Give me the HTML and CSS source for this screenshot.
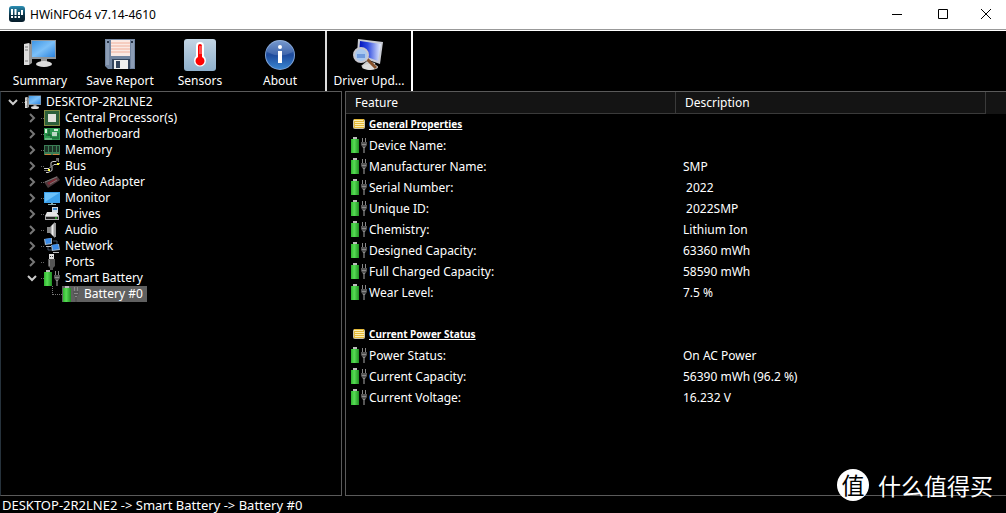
FILE: index.html
```html
<!DOCTYPE html>
<html lang="en">
<head>
<meta charset="utf-8">
<title>HWiNFO64 v7.14-4610</title>
<link rel="stylesheet" href="styles.css">
</head>
<body>

<!-- icons used more than once -->
<svg class="defs" width="0" height="0" aria-hidden="true">
    <defs>
        <linearGradient id="blue" x1="0" y1="0" x2="1" y2="1">
            <stop offset="0" stop-color="#3f97e6"/>
            <stop offset=".5" stop-color="#7cc0f8"/>
            <stop offset="1" stop-color="#2b84e0"/>
        </linearGradient>
        <linearGradient id="green" x1="0" y1="0" x2="1" y2="0">
            <stop offset="0" stop-color="#2fb52f"/>
            <stop offset=".4" stop-color="#58dc55"/>
            <stop offset="1" stop-color="#1f8f22"/>
        </linearGradient>
        <linearGradient id="steel" x1="0" y1="0" x2="1" y2="0">
            <stop offset="0" stop-color="#777"/>
            <stop offset=".5" stop-color="#eee"/>
            <stop offset="1" stop-color="#888"/>
        </linearGradient>
        <linearGradient id="navy" x1="0" y1="0" x2="1" y2="0">
            <stop offset="0" stop-color="#0010b8"/>
            <stop offset=".4" stop-color="#2f4be0"/>
            <stop offset="1" stop-color="#e8f0ff"/>
        </linearGradient>
        <linearGradient id="info" x1="0" y1="0" x2="0" y2="1">
            <stop offset="0" stop-color="#5c85c4"/>
            <stop offset=".5" stop-color="#1d4a9c"/>
            <stop offset="1" stop-color="#3a86d0"/>
        </linearGradient>
        <linearGradient id="sky" x1="0" y1="0" x2="0" y2="1">
            <stop offset="0" stop-color="#c3d5e4"/>
            <stop offset="1" stop-color="#8fb0cc"/>
        </linearGradient>
        <linearGradient id="app" x1="0" y1="0" x2="0" y2="1">
            <stop offset="0" stop-color="#2c90b5"/>
            <stop offset=".6" stop-color="#0b2f42"/>
            <stop offset="1" stop-color="#061c2a"/>
        </linearGradient>
    </defs>
    <symbol id="battery" viewBox="0 0 16 16">
        <rect x="2" y="0" width="4" height="2" fill="#bbb"/>
        <rect x="0" y="2" width="8" height="14" fill="url(#green)"/>
        <path d="M11.500 1v4M14.500 1v4" stroke="#888"/>
        <path d="M10 5h6v3l-2 3v5h-2v-5l-2-3z" fill="#555"/>
        <path d="M11 7.500h4M12 10.500h2" stroke="#8a8a8a"/>
    </symbol>
    <symbol id="computer" viewBox="0 0 32 32">
        <path d="M0 5l5-1v22H0z" fill="#ddd"/>
        <path d="M5 4l3 2v18l-3 2z" fill="#999"/>
        <path d="M1 8h3M1 11h3M1 22h3" stroke="#777"/>
        <rect x="7" y="1" width="25" height="19" fill="#8d959c"/>
        <rect x="8" y="2" width="23" height="16" fill="url(#blue)"/>
        <path d="M17 20h6v3h-6z" fill="#999"/>
        <ellipse cx="20" cy="25" rx="8" ry="3" fill="#dcdcdc"/>
    </symbol>
    <symbol id="scroll" viewBox="0 0 12 10">
        <rect x="0" y="0" width="12" height="10" rx="2" fill="#c9c2a8"/>
        <rect x="1" y="0" width="10" height="9" fill="#e3b93a"/>
        <path d="M1 1.500h9M2 3.500h9M2 5.500h9M2 7.500h9" stroke="#fbeeb4"/>
    </symbol>
    <symbol id="closed" viewBox="0 0 10 10">
        <path d="M3 1l4 4-4 4" fill="none" stroke="#777" stroke-width="2"/>
    </symbol>
    <symbol id="open" viewBox="0 0 10 10">
        <path d="M1 3l4 4 4-4" fill="none" stroke="#ccc" stroke-width="2"/>
    </symbol>
</svg>

<div class="window">

    <header class="titlebar">
        <svg class="app-icon" viewBox="0 0 16 16">
            <rect width="16" height="16" rx="3" fill="url(#app)"/>
            <path d="M3 3v6M6.500 3v6M10 6v3M13 4v5M3 10v2M6.500 10v2M10 10v2" stroke="#fff" stroke-width="2"/>
        </svg>
        <h1 class="title">HWiNFO64 v7.14-4610</h1>
        <button class="caption" aria-label="Minimize"><svg viewBox="0 0 10 10"><path d="M0 5.500h10" stroke="#000"/></svg></button>
        <button class="caption" aria-label="Maximize"><svg viewBox="0 0 10 10"><path d="M.5.5h9v9h-9z" fill="none" stroke="#000"/></svg></button>
        <button class="caption" aria-label="Close"><svg viewBox="0 0 10 10"><path d="M0 0l10 10M10 0L0 10" stroke="#000"/></svg></button>
    </header>

    <nav class="toolbar">
        <button class="tool"><svg viewBox="0 0 32 32"><use href="#computer"/></svg><span>Summary</span></button>
        <button class="tool">
            <svg viewBox="0 0 32 32">
                <path d="M1 0h30v30H4l-3-3z" fill="#71849f"/>
                <path d="M2 1h3v25H2zM27 1h3v28h-3z" fill="#8c9db5"/>
                <rect x="7" y="1" width="19" height="16" fill="#fbeae4"/>
                <path d="M7 4h19M7 7h19M7 10h19M7 13h19" stroke="#f0b09c"/>
                <path d="M3 2h2v2H3zM27 2h2v2h-2z" fill="#273447"/>
                <rect x="8" y="20" width="18" height="10" fill="#33445c"/>
                <rect x="10" y="21" width="14" height="9" fill="#eee"/>
                <rect x="12" y="22" width="4" height="7" fill="#33445c"/>
            </svg>
            <span>Save Report</span>
        </button>
        <button class="tool">
            <svg viewBox="0 0 32 32">
                <rect width="32" height="32" rx="3" fill="url(#sky)"/>
                <path d="M12 7a4 4 0 0 1 8 0v10a6 6 0 1 1-8 0z" fill="#fff"/>
                <path d="M14 7a2 2 0 0 1 4 0v11a4.500 4.500 0 1 1-4 0z" fill="#f00"/>
                <path d="M15 8h3M15 10h3M15 12h3M15 14h3" stroke="#ff9a9a"/>
            </svg>
            <span>Sensors</span>
        </button>
        <button class="tool">
            <svg viewBox="0 0 32 32">
                <circle cx="16" cy="16" r="15" fill="#7fa3d6"/>
                <circle cx="16" cy="16" r="14" fill="url(#info)"/>
                <path d="M3 13a13 12 0 0 1 26 0q-13 7-26 0z" fill="#fff" opacity=".15"/>
                <circle cx="16" cy="8" r="2" fill="#fff"/>
                <path d="M14 12h4v12h-4z" fill="#fff"/>
            </svg>
            <span>About</span>
        </button>
        <button class="tool tool-update">
            <svg viewBox="0 0 32 32">
                <path d="M14 22l8 2 1 5-7 2-8-4z" fill="#ccc"/>
                <ellipse cx="17" cy="28" rx="8" ry="3" fill="#ddd"/>
                <path d="M5 0l25 3-3 22L4 17z" fill="#c9ccd4"/>
                <path d="M7 2l21 3-3 17L6 15z" fill="url(#navy)"/>
                <path d="M14 20l9 9" stroke="#86512b" stroke-width="3"/>
                <circle cx="8" cy="16" r="7" fill="#a9c8ef" stroke="#c8c8d0" stroke-width="2"/>
                <path d="M4 17h8" stroke="#6f9ade" stroke-width="4"/>
            </svg>
            <span>Driver Upd...</span>
        </button>
    </nav>

    <main class="panes">
        <section class="pane tree-pane">
            <ul class="tree">
                <li>
                    <div class="node">
                        <button class="toggle" aria-label="Collapse"><svg viewBox="0 0 10 10"><use href="#open"/></svg></button>
                        <svg class="icon" viewBox="0 0 32 28"><use href="#computer" width="32" height="32"/></svg>
                        <span class="label">DESKTOP-2R2LNE2</span>
                    </div>
                    <ul>
                        <li class="node">
                            <button class="toggle" aria-label="Expand"><svg viewBox="0 0 10 10"><use href="#closed"/></svg></button>
                            <svg class="icon" viewBox="0 0 16 16">
                                <rect width="16" height="16" fill="#2c5f3a"/>
                                <rect x=".5" y=".5" width="15" height="15" fill="none" stroke="#d9b84a" stroke-dasharray="1 1"/>
                                <rect x="4" y="4" width="8" height="8" fill="#e2e2dc"/>
                            </svg>
                            <span class="label">Central Processor(s)</span>
                        </li>
                        <li class="node">
                            <button class="toggle" aria-label="Expand"><svg viewBox="0 0 10 10"><use href="#closed"/></svg></button>
                            <svg class="icon" viewBox="0 0 16 16">
                                <rect y="2" width="16" height="12" fill="#2f9a52"/>
                                <path d="M1 3h2v4H1zM10 3h4v2h-4z" fill="#d8f0dc"/>
                                <rect x="8" y="6" width="5" height="4" fill="#bcd8c4"/>
                                <path d="M5 3v7M2 9h5v3M14 7v6M8 12h5" stroke="#12552a" fill="none"/>
                                <path d="M1 13h7" stroke="#a5d8b4"/>
                            </svg>
                            <span class="label">Motherboard</span>
                        </li>
                        <li class="node">
                            <button class="toggle" aria-label="Expand"><svg viewBox="0 0 10 10"><use href="#closed"/></svg></button>
                            <svg class="icon" viewBox="0 0 16 16">
                                <rect y="3" width="16" height="10" fill="#3b7d55"/>
                                <path d="M1 4h3v6H1zM5 4h3v6H5zM9 4h3v6H9zM13 4h2v6h-2z" fill="#1d3327"/>
                                <path d="M1 12.500h6M9 12.500h6" stroke="#c9803c"/>
                            </svg>
                            <span class="label">Memory</span>
                        </li>
                        <li class="node">
                            <button class="toggle" aria-label="Expand"><svg viewBox="0 0 10 10"><use href="#closed"/></svg></button>
                            <svg class="icon" viewBox="0 0 16 16">
                                <path d="M0 10.500h5l2-2v-4l2-1h3l1-1V0M2 14.500h2l4-2v-4l2-2h2l4-1" fill="none" stroke="#ccc"/>
                                <path d="M0 12.500h4M14.500 0v4" stroke="#777"/>
                                <path d="M4 11h2v2H4zM13 5h2v2h-2z" fill="#ff3"/>
                            </svg>
                            <span class="label">Bus</span>
                        </li>
                        <li class="node">
                            <button class="toggle" aria-label="Expand"><svg viewBox="0 0 10 10"><use href="#closed"/></svg></button>
                            <svg class="icon" viewBox="0 0 16 16">
                                <path d="M0 8l13-6 3 4-12 8z" fill="#4a3a3c"/>
                                <path d="M3 9l9-5 1 3-8 4z" fill="#7c2a34"/>
                                <path d="M1 8l12-5M6 10l7-4" stroke="#777"/>
                            </svg>
                            <span class="label">Video Adapter</span>
                        </li>
                        <li class="node">
                            <button class="toggle" aria-label="Expand"><svg viewBox="0 0 10 10"><use href="#closed"/></svg></button>
                            <svg class="icon" viewBox="0 0 16 16">
                                <rect y="2" width="16" height="11" fill="#3da2ec"/>
                                <path d="M1 3h14L1 12z" fill="#6cc2fa"/>
                                <path d="M7 13h2v1h3v1H4v-1h3z" fill="#8aa"/>
                            </svg>
                            <span class="label">Monitor</span>
                        </li>
                        <li class="node">
                            <button class="toggle" aria-label="Expand"><svg viewBox="0 0 10 10"><use href="#closed"/></svg></button>
                            <svg class="icon" viewBox="0 0 16 16">
                                <path d="M8 1h6v6H8z" fill="#cfd8e0"/>
                                <path d="M9 2h4v2H9z" fill="#3a86c8"/>
                                <path d="M3 6h9l3 4H1z" fill="#e6e6e6"/>
                                <path d="M1 10h14v4H1z" fill="#aaa"/>
                                <path d="M2 11h12v2H2z" fill="#222"/>
                                <path d="M11 12h2" stroke="#3f3"/>
                            </svg>
                            <span class="label">Drives</span>
                        </li>
                        <li class="node">
                            <button class="toggle" aria-label="Expand"><svg viewBox="0 0 10 10"><use href="#closed"/></svg></button>
                            <svg class="icon" viewBox="0 0 16 16">
                                <path d="M3 5h3v6H3z" fill="#888"/>
                                <path d="M6 5l5-5v16l-5-5z" fill="url(#steel)"/>
                                <path d="M11.500 1v14" stroke="#999"/>
                            </svg>
                            <span class="label">Audio</span>
                        </li>
                        <li class="node">
                            <button class="toggle" aria-label="Expand"><svg viewBox="0 0 10 10"><use href="#closed"/></svg></button>
                            <svg class="icon" viewBox="0 0 16 16">
                                <path d="M9 3h4v4M4 9v3h4" fill="none" stroke="#456"/>
                                <path d="M0 1l8-1v6l-7 1z" fill="#9fb4c8"/>
                                <path d="M1 1l6-1v5l-5 1z" fill="#3a8ae6"/>
                                <path d="M2 8h5v1H2z" fill="#bbb"/>
                                <path d="M7 7l8-1 1 6-8 1z" fill="#9fb4c8"/>
                                <path d="M8 7l6-1 1 5-6 1z" fill="#3a8ae6"/>
                                <path d="M9 14h6v1H9z" fill="#bbb"/>
                            </svg>
                            <span class="label">Network</span>
                        </li>
                        <li class="node">
                            <button class="toggle" aria-label="Expand"><svg viewBox="0 0 10 10"><use href="#closed"/></svg></button>
                            <svg class="icon" viewBox="0 0 16 16">
                                <path d="M5 0h5v5H5z" fill="#ddd"/>
                                <path d="M6 2h1v1H6zM8 2h1v1H8z" fill="#333"/>
                                <path d="M4 5h7v7l-2 2v2H6v-2l-2-2z" fill="#555"/>
                                <path d="M5.500 6v6" stroke="#888"/>
                            </svg>
                            <span class="label">Ports</span>
                        </li>
                        <li>
                            <div class="node">
                                <button class="toggle" aria-label="Collapse"><svg viewBox="0 0 10 10"><use href="#open"/></svg></button>
                                <svg class="icon" viewBox="0 0 16 16"><use href="#battery"/></svg>
                                <span class="label">Smart Battery</span>
                            </div>
                            <ul>
                                <li class="node leaf">
                                    <span class="elbow"></span>
                                    <span class="selected">
                                        <svg class="icon" viewBox="0 0 16 16"><use href="#battery"/></svg>
                                        <span class="label">Battery #0</span>
                                    </span>
                                </li>
                            </ul>
                        </li>
                    </ul>
                </li>
            </ul>
        </section>

        <section class="pane list-pane">
            <table class="list">
                <colgroup><col class="col-feature"><col class="col-desc"><col></colgroup>
                <thead>
                    <tr><th>Feature</th><th>Description</th><th class="filler"></th></tr>
                </thead>
                <tbody>
                    <tr class="group"><td colspan="3"><svg viewBox="0 0 12 10"><use href="#scroll"/></svg>General Properties</td></tr>
                    <tr><td><svg viewBox="0 0 16 16"><use href="#battery"/></svg>Device Name:</td><td></td></tr>
                    <tr><td><svg viewBox="0 0 16 16"><use href="#battery"/></svg>Manufacturer Name:</td><td>SMP</td></tr>
                    <tr><td><svg viewBox="0 0 16 16"><use href="#battery"/></svg>Serial Number:</td><td>&nbsp;2022</td></tr>
                    <tr><td><svg viewBox="0 0 16 16"><use href="#battery"/></svg>Unique ID:</td><td>&nbsp;2022SMP</td></tr>
                    <tr><td><svg viewBox="0 0 16 16"><use href="#battery"/></svg>Chemistry:</td><td>Lithium Ion</td></tr>
                    <tr><td><svg viewBox="0 0 16 16"><use href="#battery"/></svg>Designed Capacity:</td><td>63360 mWh</td></tr>
                    <tr><td><svg viewBox="0 0 16 16"><use href="#battery"/></svg>Full Charged Capacity:</td><td>58590 mWh</td></tr>
                    <tr><td><svg viewBox="0 0 16 16"><use href="#battery"/></svg>Wear Level:</td><td>7.5 %</td></tr>
                    <tr><td colspan="3"></td></tr>
                    <tr class="group"><td colspan="3"><svg viewBox="0 0 12 10"><use href="#scroll"/></svg>Current Power Status</td></tr>
                    <tr><td><svg viewBox="0 0 16 16"><use href="#battery"/></svg>Power Status:</td><td>On AC Power</td></tr>
                    <tr><td><svg viewBox="0 0 16 16"><use href="#battery"/></svg>Current Capacity:</td><td>56390 mWh (96.2 %)</td></tr>
                    <tr><td><svg viewBox="0 0 16 16"><use href="#battery"/></svg>Current Voltage:</td><td>16.232 V</td></tr>
                </tbody>
            </table>
        </section>
    </main>

    <footer class="status">DESKTOP-2R2LNE2 -&gt; Smart Battery -&gt; Battery #0</footer>

    <div class="watermark" lang="zh"><span class="badge">值</span><span>什么值得买</span></div>
</div>

</body>
</html>
```

FILE: styles.css
```css
body {
    margin: 0;
    background: #000;
    color: #fff;
    font-family: "Noto Sans", "Noto Sans CJK SC", sans-serif;
    font-size: 12px;
}
button {
    padding: 0;
    border: 0;
    background: none;
    color: inherit;
    font: inherit;
}
ul {
    margin: 0;
    padding: 0;
    list-style: none;
}
svg {
    display: block;
}
.defs {
    position: absolute;
}
.window {
    position: relative;
    display: flex;
    flex-direction: column;
    height: 100vh;
    overflow: hidden;
}

/* title bar */
.titlebar {
    display: flex;
    align-items: center;
    height: 28px;
    padding-left: 9px;
    padding-bottom: 1px;
    background: #fff;
    color: #000;
    border-bottom: 1px solid #999;
}
.app-icon {
    width: 16px;
    height: 16px;
}
.title {
    flex: 1;
    margin: 0 0 0 5px;
    font-size: 12px;
    font-weight: normal;
}
.caption {
    display: flex;
    align-items: center;
    justify-content: center;
    width: 46px;
    height: 28px;
}
.caption:last-child {
    width: 40px;
}
.caption svg {
    width: 10px;
    height: 10px;
}

/* toolbar */
.toolbar {
    display: flex;
    height: 60px;
    border-top: 1px solid #fff;
}
.tool {
    display: flex;
    flex-direction: column;
    align-items: center;
    width: 80px;
    padding-top: 8px;
    line-height: 20px;
    white-space: nowrap;
}
.tool svg {
    width: 32px;
    height: 32px;
}
.tool-update {
    width: 88px;
    margin-left: 5px;
    border-left: 2px solid #ddd;
    border-right: 2px solid #fff;
}

/* panes */
.panes {
    display: flex;
    flex: 1;
    gap: 3px;
    min-height: 0;
}
.pane {
    border: 1px solid #5a5a5a;
    overflow: hidden;
}
.tree-pane {
    width: 340px;
    border-left-color: #26323c;
}
.list-pane {
    flex: 1;
    border-right: 0;
}

/* tree */
.tree {
    padding: 2px 0 0 7px;
}
.tree ul {
    padding-left: 19px;
}
.node {
    display: flex;
    align-items: center;
    height: 16px;
    line-height: 16px;
}
.toggle {
    width: 10px;
    height: 10px;
}
.icon {
    width: 16px;
    height: 16px;
}
/* dotted stub between arrow and icon */
.toggle + .icon {
    margin-left: 4px;
    padding-left: 3px;
    background: repeating-linear-gradient(to right, #666 0 1px, transparent 1px 2px) 0 8px / 3px 1px no-repeat;
}
.label {
    padding-left: 5px;
}
.leaf {
    padding-left: 6px;
}
.elbow {
    width: 9px;
    height: 8px;
    align-self: flex-start;
    border-left: 1px dotted #777;
    border-bottom: 1px dotted #777;
}
.selected {
    display: flex;
    padding: 0 4px 0 1px;
    background: #606060;
}

/* feature list */
.list {
    width: 100%;
    table-layout: fixed;
    border-collapse: separate;
    border-spacing: 0;
}
.col-feature {
    width: 330px;
}
.col-desc {
    width: 310px;
}
.list th {
    height: 20px;
    padding: 0 0 1px 9px;
    background: #141414;
    border-right: 1px solid #3a3a3a;
    border-bottom: 1px solid #3a3a3a;
    font-weight: normal;
    text-align: left;
}
.list .filler {
    border-right: 0;
    border-bottom-color: #141414;
}
.list td {
    height: 21px;
    padding: 0 0 0 7px;
    line-height: 21px;
    white-space: nowrap;
}
.list td:first-child {
    padding-left: 5px;
}
.list td svg {
    float: left;
    width: 16px;
    height: 16px;
    margin: 2px 2px 0 0;
}
.list .group td {
    font-size: 10px;
    font-weight: bold;
    text-decoration: underline;
}
.list .group svg {
    width: 12px;
    height: 10px;
    margin: 5px 4px 0 2px;
}

/* status bar */
.status {
    height: 17px;
    padding-left: 2px;
    font-size: 13px;
    line-height: 19px;
}

.watermark {
    position: absolute;
    right: 13px;
    bottom: 12px;
    display: flex;
    align-items: center;
    gap: 9px;
    font-family: "Noto Sans CJK SC", sans-serif;
    font-size: 23px;
    line-height: 30px;
}
.badge {
    width: 32px;
    height: 32px;
    border-radius: 50%;
    background: #fff;
    color: #000;
    text-align: center;
}
```
